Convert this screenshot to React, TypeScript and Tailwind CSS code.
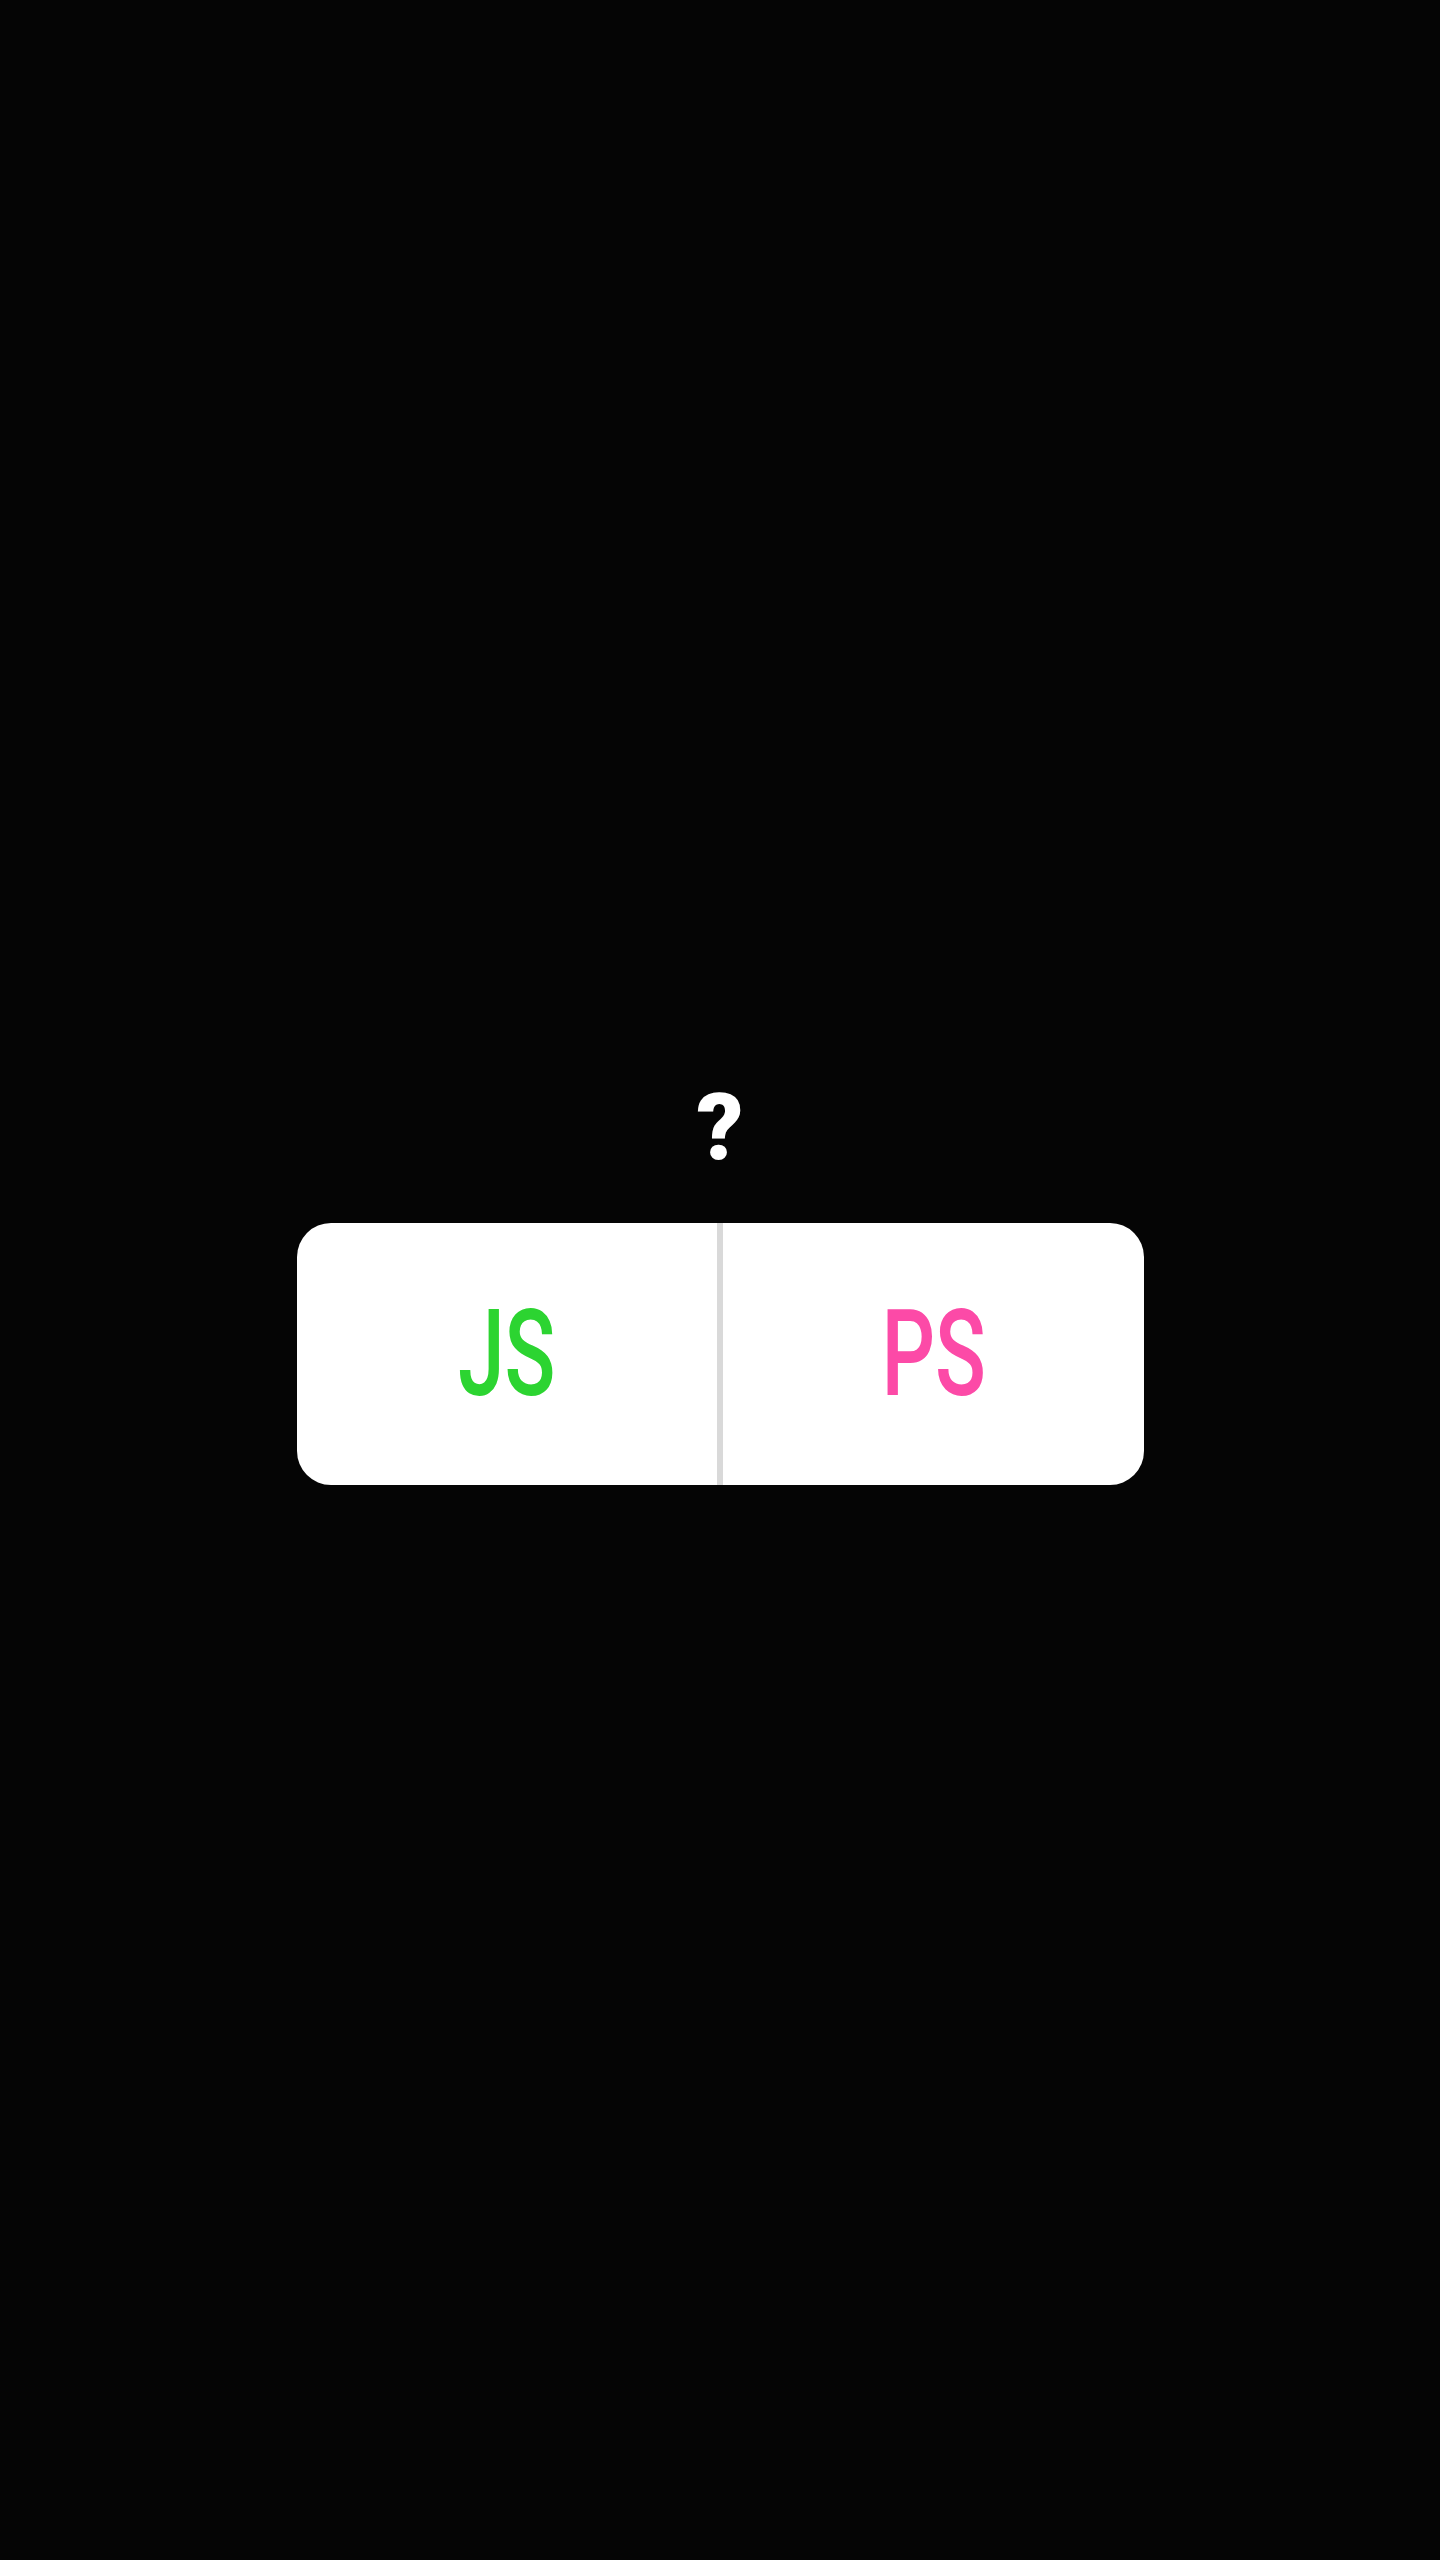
export default function App() {
  return (
    <div className="min-h-[2560px] w-full bg-[#050505] flex flex-col items-center pt-[1082px]">
      {/* Question */}
      <div className="text-[92px] leading-none font-black text-white font-['Roboto',sans-serif]">
        ?
      </div>

      {/* Poll card */}
      <div className="mt-[49px] w-[847px] h-[262px] bg-white rounded-[34px] flex overflow-hidden">
        <div className="flex-1 flex items-center justify-center">
          <span className="inline-block scale-x-[0.7] text-[120px] leading-none font-medium text-[#2cd431] font-['Roboto',sans-serif]">
            JS
          </span>
        </div>
        <div className="w-[6px] bg-[#d9d9d9]" />
        <div className="flex-1 flex items-center justify-center">
          <span className="inline-block scale-x-[0.7] text-[120px] leading-none font-medium text-[#fc4aa7] font-['Roboto',sans-serif]">
            PS
          </span>
        </div>
      </div>
    </div>
  );
}
